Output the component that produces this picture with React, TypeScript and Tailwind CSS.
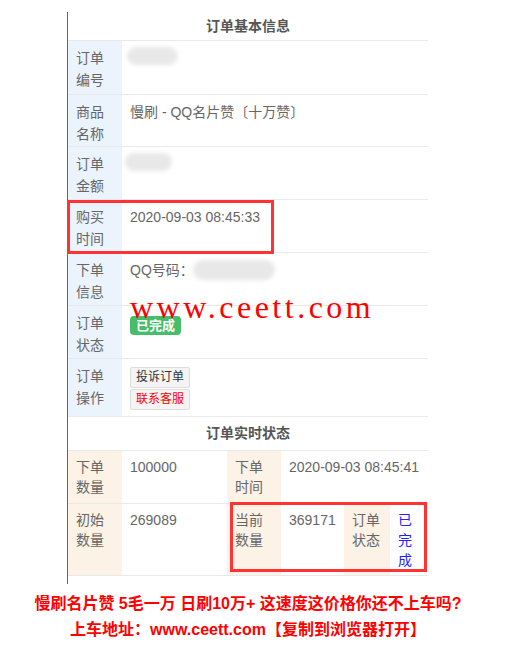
import type { ReactNode } from "react";

const FONT = "font-['Liberation_Sans','Noto_Sans_CJK_SC',sans-serif]";

type RowProps = {
  label: string;
  h: string;
  children?: ReactNode;
};

const InfoRow = ({ label, h, children }: RowProps) => (
  <div className={`flex border-b border-[#e9e9e9] ${h}`}>
    <div className="w-[54px] shrink-0 bg-[#ebf4fc] px-2 pt-[6px] leading-[22px] text-[#666]">
      {label}
    </div>
    <div className="flex-1 px-2 pt-[6px] leading-[22px] text-[#666]">{children}</div>
  </div>
);

const Blur = ({ w, h, className = "" }: { w: string; h: string; className?: string }) => (
  <div className={`${w} ${h} ${className} rounded-full bg-[#e8e8e8] blur-[2px]`} />
);

const Label = ({ w, children }: { w: string; children: ReactNode }) => (
  <div className={`${w} shrink-0 bg-[#fcf2e5] px-2 pt-[6px] leading-[20px] text-[#666]`}>
    {children}
  </div>
);

const Value = ({ w, children }: { w: string; children: ReactNode }) => (
  <div className={`${w} shrink-0 px-2 pt-[6px] leading-[20px] text-[#666]`}>{children}</div>
);

export default function App() {
  return (
    <div className={`relative h-[663px] w-[505px] overflow-hidden bg-white text-[14px] ${FONT}`}>
      <div className="ml-[67px] mt-[12px] w-[361px] border-l border-[#666] pb-[8px]">
        {/* 基本信息 */}
        <div className="flex h-[29px] items-center justify-center border-b border-[#e9e9e9] font-bold text-[#555]">
          订单基本信息
        </div>
        <InfoRow label="订单编号" h="h-[54px]">
          <Blur w="w-[51px]" h="h-[18px]" className="-ml-[3px]" />
        </InfoRow>
        <InfoRow label="商品名称" h="h-[52px]">
          慢刷 - QQ名片赞〔十万赞〕
        </InfoRow>
        <InfoRow label="订单金额" h="h-[53px]">
          <Blur w="w-[47px]" h="h-[18px]" className="-ml-[5px]" />
        </InfoRow>
        <InfoRow label="购买时间" h="h-[53px]">
          2020-09-03 08:45:33
        </InfoRow>
        <InfoRow label="下单信息" h="h-[53px]">
          <div className="flex items-center">
            QQ号码：
            <Blur w="w-[82px]" h="h-[20px]" className="-ml-[1px]" />
          </div>
        </InfoRow>
        <InfoRow label="订单状态" h="h-[53px]">
          <span className="mt-[4px] inline-block rounded-[4px] bg-[#46bd6a] px-[6px] text-[13px] font-bold leading-[19px] text-white">
            已完成
          </span>
        </InfoRow>
        <InfoRow label="订单操作" h="h-[58px]">
          <div className="flex flex-col items-start gap-[1px] pt-[2px]">
            <button className="rounded-[2px] border border-[#ddd] bg-[#f4f4f4] px-[5px] text-[12px] leading-[19px] text-[#333]">
              投诉订单
            </button>
            <button className="rounded-[2px] border border-[#ddd] bg-[#f4f4f4] px-[5px] text-[12px] leading-[19px] text-[#f00]">
              联系客服
            </button>
          </div>
        </InfoRow>

        {/* 实时状态 */}
        <div className="flex h-[34px] items-center justify-center border-b border-[#e9e9e9] font-bold text-[#555]">
          订单实时状态
        </div>
        <div className="flex h-[53px] border-b border-[#e9e9e9]">
          <Label w="w-[54px]">下单数量</Label>
          <Value w="w-[105px]">100000</Value>
          <Label w="w-[54px]">下单时间</Label>
          <Value w="w-[147px]">2020-09-03 08:45:41</Value>
        </div>
        <div className="flex h-[72px] border-b border-[#e9e9e9]">
          <Label w="w-[54px]">初始数量</Label>
          <Value w="w-[105px]">269089</Value>
          <Label w="w-[54px]">当前数量</Label>
          <Value w="w-[63px]">369171</Value>
          <Label w="w-[46px]">订单状态</Label>
          <Value w="w-[38px]">
            <span className="text-[#22f]">已完成</span>
          </Value>
        </div>
      </div>

      <div className="mt-[7px] w-[496px] text-center text-[16px] font-bold leading-[26px] text-[#f00]">
        <p>慢刷名片赞 5毛一万 日刷10万+ 这速度这价格你还不上车吗?</p>
        <p>上车地址：www.ceett.com【复制到浏览器打开】</p>
      </div>

      {/* watermark + highlight boxes */}
      <div className="pointer-events-none absolute left-[130px] top-[291px] font-['Liberation_Serif',serif] text-[32px] leading-[32px] tracking-[3.5px] text-[#f00]">
        www.ceett.com
      </div>
      <div className="pointer-events-none absolute left-[67px] top-[200px] h-[54px] w-[207px] border-[3px] border-[#f33]" />
      <div className="pointer-events-none absolute left-[230px] top-[502px] h-[70px] w-[197px] border-[3px] border-[#f33]" />
    </div>
  );
}
